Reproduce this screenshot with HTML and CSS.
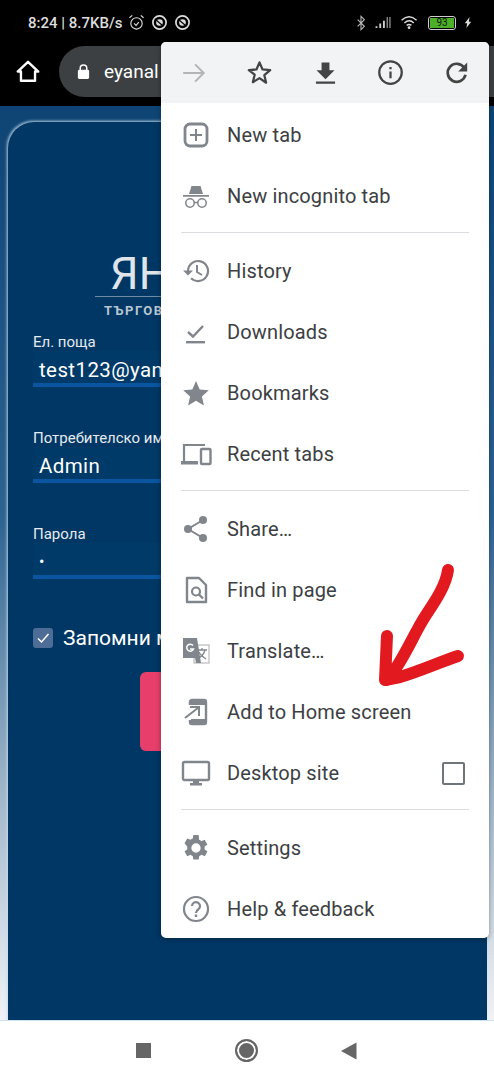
FILE: index.html
```html
<!DOCTYPE html>
<html lang="en">

<head>
    <meta charset="UTF-8">
    <meta name="viewport" content="width=device-width, initial-scale=1.0">
    <title>Add to Home screen</title>
    <link rel="stylesheet" href="styles.css">
</head>

<body>
    <div class="phone">
        <div class="status-bar">
            <div class="status-left">
                <span class="status-text">8:24 | 8.7KB/s</span>
                <svg class="status-icon" viewBox="0 0 18 18" width="17" height="17"><circle cx="9" cy="10" r="6" fill="none" stroke="#ddd" stroke-width="1.2"/><path d="M6.5 10l2 2 3-3.5M1.5 4l3-2.5M16.500 4l-3-2.500" fill="none" stroke="#ddd" stroke-width="1.200"/></svg>
                <svg class="status-icon" viewBox="0 0 18 18" width="17" height="17"><circle cx="9" cy="9" r="7" fill="none" stroke="#ddd" stroke-width="1.800"/><circle cx="9" cy="9" r="3.500" fill="#ddd"/><path d="M4 5l9 8" stroke="#000" stroke-width="1.200"/></svg>
                <svg class="status-icon" viewBox="0 0 18 18" width="17" height="17"><circle cx="9" cy="9" r="7" fill="none" stroke="#ddd" stroke-width="1.800"/><circle cx="9" cy="9" r="3.500" fill="#ddd"/><path d="M4 5l9 8" stroke="#000" stroke-width="1.200"/></svg>
            </div>
            <div class="status-right">
                <svg viewBox="0 0 12 18" width="10" height="16"><path d="M2 5l8 8-4 4V1l4 4-8 8" fill="none" stroke="#bbb" stroke-width="1.300"/></svg>
                <svg viewBox="0 0 18 14" width="18" height="13"><path d="M1 11h2v2H1zM5 8h2v5H5zM9 5h2v8H9zM13 1h1v12h-1zM16 1h1v12h-1z" fill="#ccc"/></svg>
                <svg viewBox="0 0 20 16" width="20" height="15"><path d="M1 5.500c5-4.500 11-4.500 16 0M4 8.500c3.500-3 7-3 10 0M6.500 11c2-1.500 3-1.500 5 0" fill="none" stroke="#ddd" stroke-width="1.500"/><circle cx="9" cy="13.500" r="1.500" fill="#ddd"/></svg>
                <div class="battery"><span class="battery-level">93</span></div>
                <svg viewBox="0 0 10 14" width="8" height="13"><path d="M7 0L1 8h3l-1 6 6-8H6z" fill="#ddd"/></svg>
            </div>
        </div>

        <div class="toolbar">
            <svg class="home-icon" viewBox="0 0 24 24" width="26" height="26"><path d="M12 3.500L2.500 12.500H5.500V21H18.500V12.500H21.500z" fill="none" stroke="#fff" stroke-width="2.200" stroke-linejoin="round"/></svg>
            <div class="url-bar">
                <svg viewBox="0 0 16 18" width="15" height="17"><path d="M4.500 8V5.500a3.500 3.500 0 0 1 7 0V8" fill="none" stroke="#fff" stroke-width="1.600"/><rect x="2" y="7" width="12" height="10" rx="1.500" fill="#fff"/></svg>
                <span class="url-text">eyanal</span>
            </div>
        </div>

        <div class="page">
            <div class="card">
                <div class="logo">
                    <div class="logo-name">ЯН</div>
                    <div class="logo-sub">ТЪРГОВИЯ</div>
                </div>

                <div class="field">
                    <label class="field-label">Ел. поща</label>
                    <div class="field-input">test123@yan</div>
                </div>
                <div class="field">
                    <label class="field-label">Потребителско име</label>
                    <div class="field-input">Admin</div>
                </div>
                <div class="field">
                    <label class="field-label">Парола</label>
                    <div class="field-input field-password">•</div>
                </div>

                <div class="remember">
                    <span class="remember-box">
                        <svg viewBox="0 0 20 20" width="20" height="20"><path d="M5 10.500l3.500 3.500 7-8" fill="none" stroke="#fff" stroke-width="1.500"/></svg>
                    </span>
                    <span>Запомни ме</span>
                </div>
                <div class="login-btn"></div>
            </div>
        </div>

        <div class="nav-bar">
            <span class="nav-square"></span>
            <span class="nav-circle"></span>
            <svg viewBox="0 0 16 18" width="16" height="18"><path d="M0 9L15.500 0.500V17.500z" fill="#666"/></svg>
        </div>

        <div class="menu">
            <div class="menu-top">
                <svg viewBox="0 0 24 24" width="26" height="26"><path d="M2 12H21M13 4l8 8-8 8" fill="none" stroke="#b2b5b8" stroke-width="1.800"/></svg>
                <svg viewBox="0 0 24 24" width="27" height="27"><path d="M12 3l2.700 6.300 6.800.6-5.200 4.500 1.600 6.700L12 17l-5.900 3.600 1.600-6.700L2.500 9.900l6.800-.6z" fill="none" stroke="#444" stroke-width="2" stroke-linejoin="round"/></svg>
                <svg viewBox="0 0 24 24" width="27" height="27"><path d="M8.500 3h7v7H20l-8 8-8-8h4.500zM3.500 20h17v2h-17z" fill="#444"/></svg>
                <svg viewBox="0 0 24 24" width="27" height="27"><circle cx="12" cy="12" r="10" fill="none" stroke="#444" stroke-width="2"/><path d="M11 11h2v6h-2zM11 7h2v2h-2z" fill="#444"/></svg>
                <svg viewBox="0 0 24 24" width="27" height="27"><path d="M19 8A8 8 0 1 0 20 14" fill="none" stroke="#444" stroke-width="2.400"/><path d="M21.500 3v8h-8z" fill="#444"/></svg>
            </div>

            <div class="menu-group">
                <div class="menu-item">
                    <svg class="item-icon" viewBox="0 0 28 28"><rect x="3" y="3" width="22" height="22" rx="5" fill="none" stroke="#80868b" stroke-width="2.800"/><path d="M14 8v12M8 14h12" stroke="#80868b" stroke-width="2"/></svg>
                    <span>New tab</span>
                </div>
                <div class="menu-item">
                    <svg class="item-icon" viewBox="0 0 28 28"><path d="M7 12l2.500-8h9L21 12z" fill="#80868b"/><path d="M1 13h26v1.800H1z" fill="#80868b"/><circle cx="8" cy="21" r="4.200" fill="none" stroke="#80868b" stroke-width="1.500"/><circle cx="20" cy="21" r="4.200" fill="none" stroke="#80868b" stroke-width="1.500"/><path d="M12 20.500h4" stroke="#80868b" stroke-width="1.500"/></svg>
                    <span>New incognito tab</span>
                </div>
            </div>

            <div class="menu-group">
                <div class="menu-item">
                    <svg class="item-icon" viewBox="0 0 28 28"><path d="M6 14a10 10 0 1 1 3 7.200" fill="none" stroke="#80868b" stroke-width="2.200"/><path d="M1 13.500h10l-5 5z" fill="#80868b"/><path d="M15 8v7l5 3" fill="none" stroke="#80868b" stroke-width="2"/></svg>
                    <span>History</span>
                </div>
                <div class="menu-item">
                    <svg class="item-icon" viewBox="0 0 28 28"><path d="M6 14l5 4.500L21 8" fill="none" stroke="#80868b" stroke-width="2.400"/><path d="M4 23h19v2.400H4z" fill="#80868b"/></svg>
                    <span>Downloads</span>
                </div>
                <div class="menu-item">
                    <svg class="item-icon" viewBox="0 0 28 28"><path d="M14 2l3.700 8.400 9.100.9-6.900 6.100 2 9-7.900-4.700-7.900 4.700 2-9L1.200 11.300l9.100-.9z" fill="#80868b"/></svg>
                    <span>Bookmarks</span>
                </div>
                <div class="menu-item">
                    <svg class="item-icon item-icon-wide" viewBox="0 0 32 28"><path d="M4 21V5h21" fill="none" stroke="#80868b" stroke-width="2.200"/><path d="M1 21h17v3.500H1z" fill="#80868b"/><rect x="21" y="9" width="9.500" height="15" rx="1" fill="none" stroke="#80868b" stroke-width="2.400"/></svg>
                    <span>Recent tabs</span>
                </div>
            </div>

            <div class="menu-group">
                <div class="menu-item">
                    <svg class="item-icon" viewBox="0 0 28 28"><path d="M21 5L6 14l15 9" fill="none" stroke="#80868b" stroke-width="2"/><circle cx="21" cy="5" r="4" fill="#80868b"/><circle cx="6" cy="14" r="4" fill="#80868b"/><circle cx="21" cy="23" r="4" fill="#80868b"/></svg>
                    <span>Share…</span>
                </div>
                <div class="menu-item">
                    <svg class="item-icon" viewBox="0 0 28 28"><path d="M5 2h12l7 7v17H5z" fill="none" stroke="#80868b" stroke-width="2.400" stroke-linejoin="round"/><circle cx="14" cy="15.500" r="4" fill="none" stroke="#80868b" stroke-width="2.200"/><path d="M17 18.500l4 4" stroke="#80868b" stroke-width="2.400"/></svg>
                    <span>Find in page</span>
                </div>
                <div class="menu-item">
                    <svg class="item-icon" viewBox="0 0 28 28"><rect x="12" y="8" width="15" height="18" fill="#fff" stroke="#a8acb0" stroke-width="1"/><path d="M1 1h14l4 25h-5l-1-5H1z" fill="#80868b"/><path d="M15 13h10M20 11v2M23 13c-1 4-4 7-7 8M17 15c1 3 4 5 7 7" fill="none" stroke="#80868b" stroke-width="1.300"/><path d="M11 8.500a3.500 3.500 0 1 0 .5 3.500H8" fill="none" stroke="#fff" stroke-width="1.500"/></svg>
                    <span>Translate…</span>
                </div>
                <div class="menu-item">
                    <svg class="item-icon" viewBox="0 0 28 28"><path d="M8 7V4a2 2 0 0 1 2-2h12a2 2 0 0 1 2 2v20a2 2 0 0 1-2 2H10a2 2 0 0 1-2-2v-2" fill="none" stroke="#80868b" stroke-width="2.400"/><path d="M9 3h14v4H9zM9 21h14v4H9z" fill="#80868b"/><path d="M8 9h9v9M16.500 9.500L3 20" fill="none" stroke="#80868b" stroke-width="2"/></svg>
                    <span>Add to Home screen</span>
                </div>
                <div class="menu-item">
                    <svg class="item-icon item-icon-wide" viewBox="0 0 30 28"><rect x="2" y="3" width="26" height="18" rx="1.500" fill="none" stroke="#80868b" stroke-width="2.400"/><path d="M12 21h6v3h3v2.500H9V24h3z" fill="#80868b"/></svg>
                    <span>Desktop site</span>
                    <span class="menu-check"></span>
                </div>
            </div>

            <div class="menu-group">
                <div class="menu-item">
                    <svg class="item-icon" viewBox="1.500 1.500 21 21"><path d="M19.400 13a7.600 7.600 0 0 0 0-2l2.100-1.600-2-3.500-2.500 1a7.500 7.500 0 0 0-1.700-1L15 2.300h-4l-.4 2.600a7.500 7.500 0 0 0-1.700 1l-2.500-1-2 3.500L6.500 11a7.600 7.600 0 0 0 0 2l-2.100 1.600 2 3.500 2.500-1a7.500 7.500 0 0 0 1.700 1l.4 2.600h4l.4-2.600a7.500 7.500 0 0 0 1.700-1l2.500 1 2-3.500zM13 15.500a3.500 3.500 0 1 1 0-7 3.500 3.500 0 0 1 0 7z" fill="#80868b" fill-rule="evenodd" transform="translate(-1 0)"/></svg>
                    <span>Settings</span>
                </div>
                <div class="menu-item">
                    <svg class="item-icon" viewBox="0 0 28 28"><circle cx="14" cy="14" r="12" fill="none" stroke="#80868b" stroke-width="2.200"/><path d="M10 11a4 4 0 1 1 6.500 3.200c-1.500 1.100-2.500 1.800-2.500 3.800" fill="none" stroke="#80868b" stroke-width="2.200"/><path d="M12.800 19.500h2.400v2.400h-2.400z" fill="#80868b"/></svg>
                    <span>Help &amp; feedback</span>
                </div>
            </div>
        </div>

        <!-- hand drawn marker on top of the screenshot -->
        <svg class="marker" viewBox="0 0 494 1080" width="494" height="1080">
            <path d="M448 570C446 585 436 600 426 615C416 630 408 650 396 668L387 680M387 636L385 680L400 677C420 671 440 662 458 656" fill="none" stroke="#e2191f" stroke-width="12" stroke-linecap="round" stroke-linejoin="round"/>
        </svg>
    </div>
</body>

</html>
```

FILE: styles.css
```css
* {
    box-sizing: border-box;
}

body {
    margin: 0;
    font-family: Roboto, "Noto Sans", sans-serif;
    background: #000;
}

.phone {
    position: relative;
    width: 494px;
    height: 1080px;
    overflow: hidden;
    display: flex;
    flex-direction: column;
}

/* status bar */
.status-bar {
    height: 42px;
    background: #000;
    display: flex;
    justify-content: space-between;
    align-items: center;
    padding: 3px 22px 0 28px;
    flex: none;
}

.status-left,
.status-right {
    display: flex;
    align-items: center;
}

.status-left {
    gap: 6px;
}

.status-right {
    gap: 8px;
}

.status-text {
    color: #ddd;
    font-size: 15px;
    font-weight: 500;
}

.battery {
    width: 28px;
    height: 14px;
    border: 1px solid #ccc;
    border-radius: 3px;
    padding: 1px;
    display: flex;
}

.battery-level {
    flex: 1;
    background: #4caf28;
    color: #111;
    font-size: 10px;
    line-height: 10px;
    text-align: center;
}

/* browser toolbar */
.toolbar {
    height: 64px;
    background: #000;
    display: flex;
    align-items: center;
    padding: 0 0 6px 15px;
    gap: 18px;
    flex: none;
}

.url-bar {
    flex: 1;
    height: 51px;
    background: #3c4043;
    border-radius: 26px 0 0 26px;
    display: flex;
    align-items: center;
    gap: 13px;
    padding-left: 17px;
    color: #fff;
    font-size: 19px;
}

/* page behind the menu */
.page {
    flex: 1;
    padding: 16px 0 0 8px;
    background: linear-gradient(180deg, #0d4474, #2d6391 45%, #9fb6c9 75%, #f0f3f7);
    overflow: hidden;
}

.card {
    width: 479px;
    height: 900px;
    background: #003764;
    border-radius: 26px 26px 0 0;
    box-shadow: -1px -1px 3px rgba(200, 220, 235, 0.9);
    padding: 130px 0 0 25px;
    color: #fff;
}

.logo {
    margin-left: 62px;
    height: 81px;
    color: #dfe5ea;
}

.logo-name {
    font-size: 45px;
    line-height: 44px;
    margin-left: 15px;
    white-space: nowrap;
}

.logo-sub {
    border-top: 1px solid #6f8ba5;
    font-size: 13px;
    font-weight: 700;
    padding: 6px 0 0 9px;
    letter-spacing: 1.5px;
    color: #b9c6d2;
    white-space: nowrap;
}

.field {
    margin-bottom: 42px;
}

.field-label {
    display: block;
    font-size: 15px;
    line-height: 18px;
    color: #e6ebf0;
    white-space: nowrap;
}

.field-input {
    height: 36px;
    border-bottom: 4px solid #0a55a0;
    background: #003a68;
    font-size: 20.500px;
    line-height: 38px;
    padding-left: 6px;
    letter-spacing: 0.4px;
    white-space: nowrap;
}

.field-password {
    font-size: 16px;
}

.remember {
    display: flex;
    align-items: center;
    gap: 10px;
    font-size: 21px;
    margin-top: 47px;
}

.remember-box {
    width: 20px;
    height: 20px;
    background: #4d6c96;
    border-radius: 3px;
    display: flex;
}

.login-btn {
    width: 60px;
    height: 79px;
    margin: 22px 0 0 107px;
    background: #e83e6c;
    border-radius: 6px;
}

/* android nav bar */
.nav-bar {
    height: 60px;
    background: #fff;
    border-top: 1px solid #cfe0ee;
    display: flex;
    align-items: center;
    justify-content: space-between;
    padding: 0 137px 0 136px;
    flex: none;
}

.nav-square {
    width: 15px;
    height: 15px;
    background: #666;
}

.nav-circle {
    width: 23px;
    height: 23px;
    border-radius: 50%;
    background: #666;
    border: 2px solid #666;
    box-shadow: inset 0 0 0 2px #fff;
}

/* overflow menu */
.menu {
    position: absolute;
    top: 42px;
    left: 161px;
    width: 328px;
    height: 896px;
    background: #fff;
    border-radius: 5px;
    box-shadow: 0 1px 5px rgba(0, 0, 0, 0.35);
    overflow: hidden;
    color: #3c4043;
    font-size: 20px;
    letter-spacing: 0.15px;
}

.menu-top {
    height: 61px;
    background: #f1f3f4;
    display: flex;
    align-items: center;
    justify-content: space-between;
    padding: 0 19px 0 20px;
    margin-bottom: 1.500px;
}

.menu-top svg {
    display: block;
}

.menu-group {
    margin: 0 20px 7.500px 20px;
    padding-bottom: 5.500px;
    border-bottom: 1px solid #dadce0;
}

.menu-group:last-child {
    border-bottom: none;
    margin-bottom: 0;
}

.menu-item {
    height: 61px;
    display: flex;
    align-items: center;
    gap: 17px;
    margin-left: 1px;
}

.item-icon {
    width: 28px;
    height: 28px;
    flex: none;
}

.item-icon-wide {
    width: 32px;
    margin: 0 -2px;
}

.menu-check {
    width: 23px;
    height: 23px;
    border: 2.500px solid #70757a;
    border-radius: 2px;
    margin-left: auto;
    margin-right: 4px;
}

.marker {
    position: absolute;
    top: 0;
    left: 0;
    pointer-events: none;
}
```
